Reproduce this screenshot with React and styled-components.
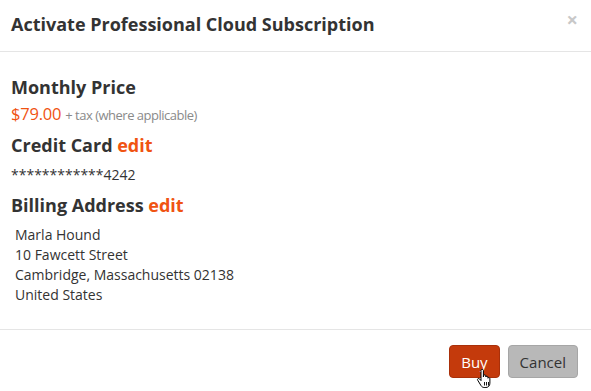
import React from "react";
import styled, { createGlobalStyle } from "styled-components";

const GlobalStyle = createGlobalStyle`
  html, body {
    margin: 0;
    padding: 0;
    background: #ffffff;
  }
  body {
    font-family: "Open Sans", "Liberation Sans", sans-serif;
    color: #333333;
  }
`;

const Modal = styled.div`
  width: 591px;
  height: 391px;
  display: flex;
  flex-direction: column;
  background: #ffffff;
`;

const Header = styled.div`
  display: flex;
  align-items: flex-start;
  justify-content: space-between;
  height: 52px;
  box-sizing: border-box;
  padding: 13px 13px 0 11px;
  border-bottom: 1px solid #e5e5e5;
`;

const Title = styled.h3`
  margin: 0;
  font-size: 18px;
  line-height: 22px;
  font-weight: 700;
  color: #333333;
`;

const Close = styled.button`
  border: none;
  background: none;
  padding: 0;
  margin-top: -3px;
  font-family: "Open Sans", sans-serif;
  font-size: 20px;
  font-weight: 700;
  line-height: 20px;
  color: #c8c8c8;
  cursor: pointer;
`;

const Body = styled.div`
  flex: 1;
  display: flex;
  flex-direction: column;
  padding: 22px 11px 0 11px;
  border-bottom: 1px solid #e5e5e5;
`;

const Heading = styled.h4`
  margin: ${(p) => (p.$first ? "0" : "7px 0 0 0")};
  font-size: 18px;
  line-height: 26px;
  font-weight: 700;
  color: #333333;
`;

const Edit = styled.a`
  color: #f05312;
  text-decoration: none;
  cursor: pointer;
`;

const PriceLine = styled.div`
  margin-top: 4px;
  line-height: 20px;
  display: flex;
  align-items: baseline;
  gap: 4px;
`;

const Price = styled.span`
  font-size: 16.5px;
  color: #f05312;
  letter-spacing: -0.2px;
`;

const Tax = styled.span`
  font-size: 13px;
  color: #8a8a8a;
  letter-spacing: -0.5px;
`;

const Text = styled.div`
  margin-top: 7px;
  padding-left: ${(p) => (p.$indent ? "4px" : "0")};
  font-size: 14px;
  line-height: 20px;
  color: #333333;
`;

const Footer = styled.div`
  display: flex;
  justify-content: flex-end;
  gap: 8px;
  padding: 15px 13px 13px 0;
`;

const Button = styled.button`
  position: relative;
  height: 33px;
  padding: 0 11px;
  border-radius: 4px;
  border: 1px solid ${(p) => (p.$primary ? "#a9300a" : "#a6a6a6")};
  background: ${(p) => (p.$primary ? "#c43a0c" : "#b8b8b8")};
  color: ${(p) => (p.$primary ? "#ffffff" : "#333333")};
  font-family: "Open Sans", sans-serif;
  font-size: 15px;
  cursor: pointer;
`;

const Cursor = styled.svg`
  position: absolute;
  left: 26px;
  top: 23px;
  width: 17px;
  height: 20px;
  pointer-events: none;
`;

const HandCursor = () => (
  <Cursor viewBox="0 0 17 20">
    <path
      d="M5 1.5c0-.8.6-1.2 1.2-1.2s1.2.4 1.2 1.2V8l.2-1.3c.2-.6.6-.9 1.2-.9s1 .4 1 1v1.2c.2-.5.6-.8 1.1-.8.6 0 1 .4 1 1v1c.2-.4.6-.6 1-.6.6 0 1 .4 1 1v4.6c0 2.3-1.6 4.3-4 4.3H8.2c-1.4 0-2.4-.7-3.2-1.9L1.7 11.2c-.4-.6-.2-1.3.4-1.6.5-.3 1.2-.1 1.6.4L5 11.6z"
      fill="#ffffff"
      stroke="#000000"
      strokeWidth="1"
      strokeLinejoin="round"
    />
    <path d="M8.5 13v3.5M10.5 13v3.5M12.5 13v3.5" stroke="#000" strokeWidth="0.9" />
  </Cursor>
);

export default function App() {
  return (
    <>
      <GlobalStyle />
      <Modal>
        <Header>
          <Title>Activate Professional Cloud Subscription</Title>
          <Close>×</Close>
        </Header>
        <Body>
          <Heading $first>Monthly Price</Heading>
          <PriceLine>
            <Price>$79.00</Price>
            <Tax>+ tax (where applicable)</Tax>
          </PriceLine>
          <Heading>
            Credit Card <Edit>edit</Edit>
          </Heading>
          <Text>************4242</Text>
          <Heading>
            Billing Address <Edit>edit</Edit>
          </Heading>
          <Text $indent>
            Marla Hound
            <br />
            10 Fawcett Street
            <br />
            Cambridge, Massachusetts 02138
            <br />
            United States
          </Text>
        </Body>
        <Footer>
          <Button $primary>
            Buy
            <HandCursor />
          </Button>
          <Button>Cancel</Button>
        </Footer>
      </Modal>
    </>
  );
}
